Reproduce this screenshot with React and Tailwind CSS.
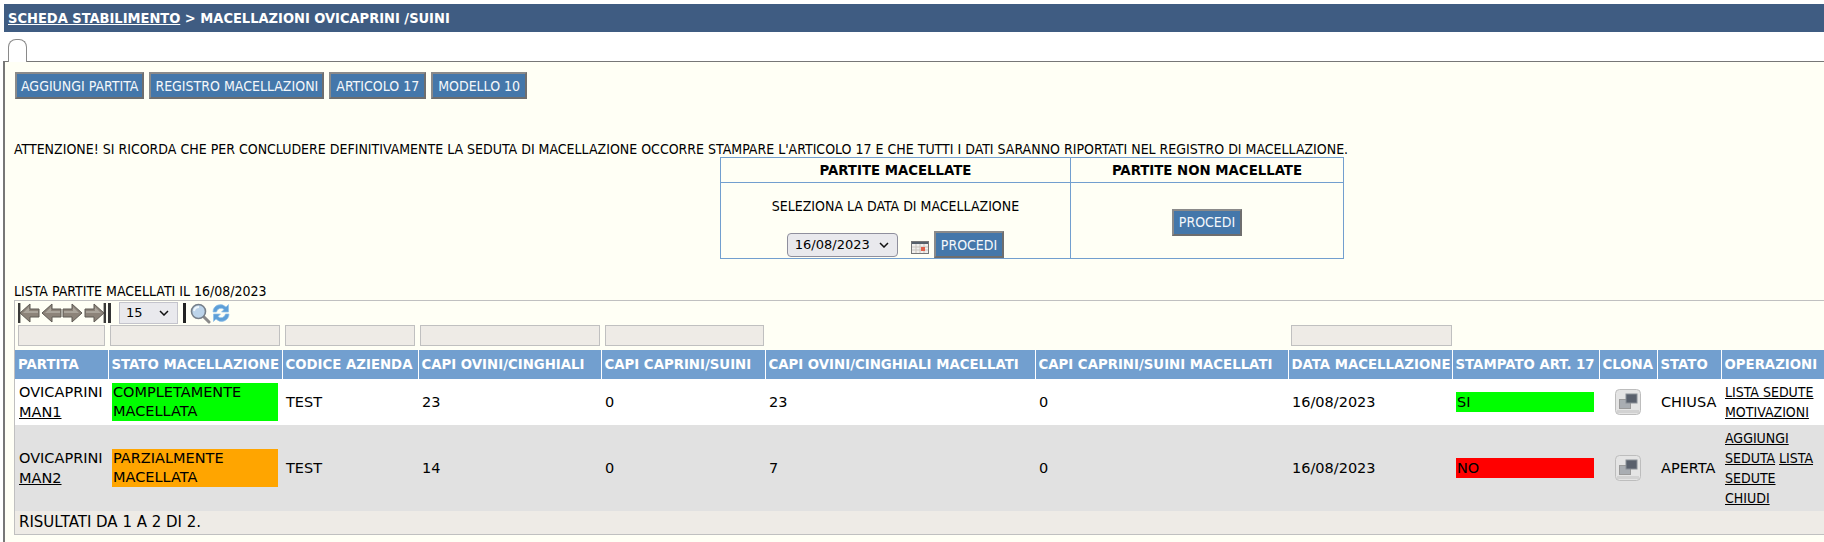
import React from "react";

const tahoma = "[font-family:'DejaVu_Sans_Condensed','DejaVu_Sans',sans-serif]";

function Btn({ children, className = "px-[5px]" }) {
  return (
    <button className={"h-[27px] bg-[#4477aa] text-[#f4f7fb] text-[14px] border-2 border-t-[#8a8a8a] border-l-[#8a8a8a] border-r-[#6e6e6e] border-b-[#6e6e6e] leading-none whitespace-nowrap " + className}>
      {children}
    </button>
  );
}

function Arrow({ dir, bar }) {
  return (
    <svg width="22" height="20" viewBox="0 0 22 20" className={dir === "r" ? "-scale-x-100" : ""}>
      {bar && <rect x="0" y="0" width="2.4" height="20" fill="#3a3a38" />}
      <path d="M2 10 L12 1 V6 H21 V14 H12 V19 Z" fill="#8c8379" stroke="#5f5b55" strokeWidth="1" />
      <path d="M5 10 L11 4 V8 H20 V10 Z" fill="#aaa49a" />
    </svg>
  );
}

function Calendar() {
  return (
    <svg width="18" height="13" viewBox="0 0 18 13" className="mt-[5px]">
      <rect x="0.5" y="0.5" width="17" height="12" fill="#f1efec" stroke="#777" />
      <rect x="1" y="1" width="16" height="2" fill="#56606a" />
      <path d="M1 6H17M1 9H17M5 3V12M9 3V12M13 3V12" stroke="#c9c4bd" strokeWidth="1" />
      <rect x="10" y="6" width="4" height="4" fill="#e0604a" />
    </svg>
  );
}

function Chevron({ className }) {
  return (
    <svg width="10" height="6" viewBox="0 0 10 6" className={"absolute pointer-events-none " + className}>
      <path d="M1 1 L5 5 L9 1" fill="none" stroke="#111" strokeWidth="1.5" />
    </svg>
  );
}

function CloneIcon() {
  return (
    <svg width="26" height="26" viewBox="0 0 26 26" className="mx-auto block">
      <rect x="0.5" y="0.5" width="25" height="25" rx="4" fill="#e4e4e4" stroke="#bdbdbd" />
      <rect x="2" y="21" width="22" height="3" fill="#d2d2d2" />
      <rect x="4.5" y="10.5" width="11" height="9" fill="#a9adb2" stroke="#9a9a9a" />
      <rect x="11" y="5" width="11" height="9" fill="#59606c" stroke="#8a8f96" />
    </svg>
  );
}

function Magnifier() {
  return (
    <svg width="21" height="21" viewBox="0 0 21 21">
      <path d="M13 13 L19 19" stroke="#8a8a8a" strokeWidth="3" strokeLinecap="round" />
      <circle cx="8.5" cy="8.5" r="7" fill="#bcd4ea" stroke="#77808a" strokeWidth="1.6" />
      <path d="M4 8 A5 5 0 0 1 9 4" stroke="#eef6fc" strokeWidth="2" fill="none" />
    </svg>
  );
}

function Refresh() {
  return (
    <svg width="20" height="20" viewBox="0 0 20 20">
      <path d="M2 9 A7.5 7.5 0 0 1 15 4 L17.5 1.5 V9 H10.5 L13 6.5 A4.5 4.5 0 0 0 5.5 9 Z" fill="#5d9fd8" stroke="#8fc0e8" strokeWidth="0.7" />
      <path d="M18 11 A7.5 7.5 0 0 1 5 16 L2.5 18.5 V11 H9.5 L7 13.5 A4.5 4.5 0 0 0 14.5 11 Z" fill="#5d9fd8" stroke="#8fc0e8" strokeWidth="0.7" />
    </svg>
  );
}

const columns = [
  ["PARTITA", "w-[93px]"],
  ["STATO MACELLAZIONE", "w-[174px]"],
  ["CODICE AZIENDA", "w-[136px]"],
  ["CAPI OVINI/CINGHIALI", "w-[183px]"],
  ["CAPI CAPRINI/SUINI", "w-[164px]"],
  ["CAPI OVINI/CINGHIALI MACELLATI", "w-[270px]"],
  ["CAPI CAPRINI/SUINI MACELLATI", "w-[253px]"],
  ["DATA MACELLAZIONE", "w-[164px]"],
  ["STAMPATO ART. 17", "w-[147px]"],
  ["CLONA", "w-[58px]"],
  ["STATO", "w-[64px]"],
  ["OPERAZIONI", "w-[103px]"],
];

const filters = [
  "ml-[3px] w-[87px]",
  "ml-[5px] w-[170px]",
  "ml-[5px] w-[130px]",
  "ml-[5px] w-[180px]",
  "ml-[5px] w-[159px]",
  "ml-[527px] w-[161px]",
];

const linkCls = "underline text-black";

function Row({ bg, man, state, stateBg, cov, cap, covm, capm, stamp, stampBg, stato, ops, h }) {
  const td = "px-[4px] py-0 align-middle";
  return (
    <tr className={bg + " " + h}>
      <td className={td}>OVICAPRINI<br /><a className={linkCls}>{man}</a></td>
      <td className={td}><div className={stateBg + " w-[166px] pl-[1px] leading-[19px]"}>{state}<br />MACELLATA</div></td>
      <td className={td}>TEST</td>
      <td className={td}>{cov}</td>
      <td className={td}>{cap}</td>
      <td className={td}>{covm}</td>
      <td className={td}>{capm}</td>
      <td className={td}>16/08/2023</td>
      <td className={td}><div className={stampBg + " w-[138px] pl-[1px]"}>{stamp}</div></td>
      <td className={td}><CloneIcon /></td>
      <td className={td}>{stato}</td>
      <td className={td + " text-[14px] " + tahoma}>{ops}</td>
    </tr>
  );
}

export default function App() {
  return (
    <div className={"w-[1824px] h-[542px] overflow-hidden bg-white text-black flex flex-col " + tahoma}>
      <div className="mt-[4px] ml-[4px] h-[28px] bg-[#3f5c82] text-white font-bold text-[14.5px] leading-[28px] pl-[4px] shrink-0">
        <a className="underline">SCHEDA STABILIMENTO</a> &gt; MACELLAZIONI OVICAPRINI /SUINI
      </div>
      <div className="ml-[8px] mt-[7px] w-[19px] h-[23px] -mb-[1px] z-10 relative bg-white border border-[#8a8a8a] border-b-0 rounded-t-[8px] shrink-0"></div>
      <div className="ml-[3px] flex-1 bg-[#fffff5] border-l-2 border-t border-[#777] pl-[9px] pt-[10px] flex flex-col">
        <div className="flex gap-[5px] ml-[1px]">
          <Btn className="px-[4px]">AGGIUNGI PARTITA</Btn>
          <Btn className="px-[4px]">REGISTRO MACELLAZIONI</Btn>
          <Btn>ARTICOLO 17</Btn>
          <Btn>MODELLO 10</Btn>
        </div>
        <p className="mt-[42px] text-[14px] leading-[16px] whitespace-nowrap">
          ATTENZIONE! SI RICORDA CHE PER CONCLUDERE DEFINITIVAMENTE LA SEDUTA DI MACELLAZIONE OCCORRE STAMPARE L'ARTICOLO 17 E CHE TUTTI I DATI SARANNO RIPORTATI NEL REGISTRO DI MACELLAZIONE.
        </p>
        <table className="ml-[706px] w-[624px] table-fixed border-collapse text-[14px]">
          <thead>
            <tr className="h-[25px]">
              <th className="w-[350px] border border-[#729fcf] text-[14.8px] font-bold">PARTITE MACELLATE</th>
              <th className="border border-[#729fcf] text-[14.8px] font-bold">PARTITE NON MACELLATE</th>
            </tr>
          </thead>
          <tbody>
            <tr className="h-[76px]">
              <td className="border border-[#729fcf] text-center p-0 align-bottom">
                <div className="mb-[17px] leading-[16px]">SELEZIONA LA DATA DI MACELLAZIONE</div>
                <div className="flex items-center justify-center gap-[5px]">
                  <div className="relative mr-[8px]">
                    <select className="block w-[111px] h-[24px] bg-[#e9e9ed] border border-[#8f8f9d] rounded-[4px] text-[13px] pl-[7px] appearance-none font-['DejaVu_Sans',sans-serif]">
                      <option>16/08/2023</option>
                    </select>
                    <Chevron className="right-[9px] top-[9px]" />
                  </div>
                  <Calendar />
                  <Btn>PROCEDI</Btn>
                </div>
              </td>
              <td className="border border-[#729fcf] text-center p-0">
                <Btn className="mt-[3px] px-[5px]">PROCEDI</Btn>
              </td>
            </tr>
          </tbody>
        </table>
        <div className="mt-[24px] text-[14px] leading-[16px]">LISTA PARTITE MACELLATI IL 16/08/2023</div>
        <div className="mt-[1px] border-l border-t border-[#c0c0c0] flex flex-col font-['DejaVu_Sans',sans-serif] text-[14.5px]">
          <div className="h-[24px] flex items-center pl-[3px] gap-0">
            <Arrow dir="l" bar />
            <Arrow dir="l" />
            <Arrow dir="r" />
            <Arrow dir="r" bar />
            <div className="w-[3px] h-[20px] bg-[#333] ml-[2px] mr-[8px]"></div>
            <div className="relative">
              <select className="block w-[59px] h-[22px] bg-[#e9e9ed] border border-[#c4c4cc] text-[13px] pl-[6px] appearance-none">
                <option>15</option>
              </select>
              <Chevron className="right-[9px] top-[8px]" />
            </div>
            <div className="w-[3px] h-[20px] bg-[#222] ml-[5px] mr-[4px]"></div>
            <Magnifier />
            <Refresh />
          </div>
          <div className="h-[25px] flex items-start">
            {filters.map((f, i) => (
              <div key={i} className={f + " h-[21px] bg-[#eeebe6] border border-[#c0c0c0]"}></div>
            ))}
          </div>
          <table className="w-[1809px] table-fixed border-collapse">
            <thead>
              <tr className="h-[29px] bg-[#729fcf] text-white text-[13.3px]">
                {columns.map(([t, w]) => (
                  <th key={t + w} className={w + " px-[3px] text-left font-bold whitespace-nowrap border-r border-white last:border-r-0 overflow-hidden"}>{t}</th>
                ))}
              </tr>
            </thead>
            <tbody className="leading-[20px]">
              <Row bg="bg-white" h="h-[46px]" man="MAN1" state="COMPLETAMENTE" stateBg="bg-[#00ff00]" cov="23" cap="0" covm="23" capm="0" stamp="SI" stampBg="bg-[#00ff00]" stato="CHIUSA"
                ops={<><a className={linkCls}>LISTA SEDUTE</a><br /><a className={linkCls}>MOTIVAZIONI</a></>} />
              <Row bg="bg-[#e1e1e1]" h="h-[86px]" man="MAN2" state="PARZIALMENTE" stateBg="bg-[#ffa500]" cov="14" cap="0" covm="7" capm="0" stamp="NO" stampBg="bg-[#ff0000]" stato="APERTA"
                ops={<><a className={linkCls}>AGGIUNGI</a><br /><a className={linkCls}>SEDUTA</a> <a className={linkCls}>LISTA</a><br /><a className={linkCls}>SEDUTE</a><br /><a className={linkCls}>CHIUDI</a></>} />
            </tbody>
          </table>
          <div className="h-[24px] bg-[#eeebe6] border-b border-[#c0c0c0] pl-[4px] leading-[22px] text-[15px]">RISULTATI DA 1 A 2 DI 2.</div>
        </div>
      </div>
    </div>
  );
}
